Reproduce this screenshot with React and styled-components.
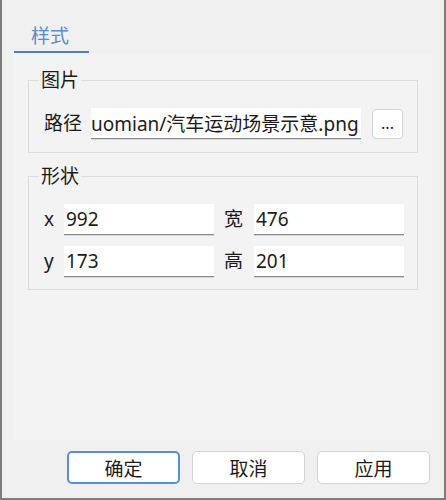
import React from 'react';
import styled, { createGlobalStyle } from 'styled-components';

const GlobalStyle = createGlobalStyle`
  html, body {
    margin: 0;
    padding: 0;
    background: #f0f0f0;
  }
  * {
    box-sizing: border-box;
  }
`;

// Dialog frame
const Window = styled.div`
  width: 446px;
  height: 500px;
  display: flex;
  flex-direction: column;
  background: #f0f0f0;
  border-left: 2px solid #7d7d7d;
  border-right: 2px solid #7d7d7d;
  border-bottom: 2px solid #7d7d7d;
  font-family: "Noto Sans", "Noto Sans CJK SC", sans-serif;
  font-size: 19px;
  color: #1b1b1b;
`;

// Tab strip
const TabBar = styled.div`
  height: 53px;
  padding-left: 12px;
  display: flex;
  align-items: flex-end;
`;

const Tab = styled.div`
  width: 75px;
  height: 53px;
  display: flex;
  align-items: center;
  justify-content: center;
  padding-top: 18px;
  padding-right: 3px;
  border-bottom: 2px solid #4a7fc3;
  color: #5b8ccc;
  font-size: 19px;
`;

const Panel = styled.div`
  margin: 0 12px;
  height: 387px;
  background: #f3f3f3;
  padding: 17px 14px 0 14px;
  display: flex;
  flex-direction: column;
  gap: 13px;
`;

// Group box
const Group = styled.fieldset`
  margin: 0;
  padding: 18px 14px ${({ bottom }) => bottom}px 14px;
  border: 1px solid #dcdcdc;
  min-width: 0;
`;

const Legend = styled.legend`
  margin-left: -4px;
  padding: 0 2px;
  line-height: 20px;
  font-size: 19px;
  color: #1b1b1b;
`;

const PathRow = styled.div`
  display: flex;
  align-items: center;
  height: 31px;
`;

const Label = styled.span`
  width: ${({ w }) => w}px;
  padding-left: ${({ pl }) => pl || 1}px;
  flex-shrink: 0;
  white-space: nowrap;
  line-height: 31px;
`;

const Field = styled.input`
  width: ${({ w }) => w}px;
  height: 31px;
  border: none;
  border-bottom: 1px solid #8a8a8a;
  box-shadow: 0 1px 0 #d6d6d6;
  background: #ffffff;
  padding: 0 0 0 ${({ pl }) => pl}px;
  margin: 0;
  font-family: "Noto Sans", "Noto Sans CJK SC", sans-serif;
  font-size: 19px;
  color: #1b1b1b;
  outline: none;
`;

const SmallButton = styled.button`
  width: 31px;
  height: 30px;
  margin-left: 11px;
  padding: 0 0 7px 0;
  border: 1px solid #d4d4d4;
  border-radius: 4px;
  background: #ffffff;
  font-family: "Noto Sans", sans-serif;
  font-size: 16px;
  line-height: 1;
  color: #1b1b1b;
  display: flex;
  align-items: flex-end;
  justify-content: center;
`;

const ShapeGrid = styled.div`
  display: grid;
  grid-template-columns: 21px 150px 40px 150px;
  grid-auto-rows: 31px;
  row-gap: 11px;
  align-items: center;
`;

// Footer buttons
const Footer = styled.div`
  display: flex;
  justify-content: flex-end;
  gap: 12px;
  padding: 11px 14px 0 0;
`;

const DialogButton = styled.button`
  width: 113px;
  height: 33px;
  background: #ffffff;
  border: ${({ primary }) => (primary ? '2px solid #5a8fd6' : '1px solid #d4d4d4')};
  border-radius: 5px;
  font-family: "Noto Sans CJK SC", sans-serif;
  font-size: 19px;
  color: #1b1b1b;
  padding: 0;
`;

const App = () => {
  return (
    <>
      <GlobalStyle />
      <Window>
        <TabBar>
          <Tab>样式</Tab>
        </TabBar>
        <Panel>
          <Group bottom={13}>
            <Legend>图片</Legend>
            <PathRow>
              <Label w={48}>路径</Label>
              <Field w={270} pl={0} readOnly value="uomian/汽车运动场景示意.png" />
              <SmallButton>...</SmallButton>
            </PathRow>
          </Group>
          <Group bottom={12}>
            <Legend>形状</Legend>
            <ShapeGrid>
              <Label w={21}>x</Label>
              <Field w={150} pl={2} readOnly value="992" />
              <Label w={40} pl={10}>宽</Label>
              <Field w={150} pl={2} readOnly value="476" />
              <Label w={21}>y</Label>
              <Field w={150} pl={2} readOnly value="173" />
              <Label w={40} pl={10}>高</Label>
              <Field w={150} pl={2} readOnly value="201" />
            </ShapeGrid>
          </Group>
        </Panel>
        <Footer>
          <DialogButton primary>确定</DialogButton>
          <DialogButton>取消</DialogButton>
          <DialogButton>应用</DialogButton>
        </Footer>
      </Window>
    </>
  );
};

export default App;
